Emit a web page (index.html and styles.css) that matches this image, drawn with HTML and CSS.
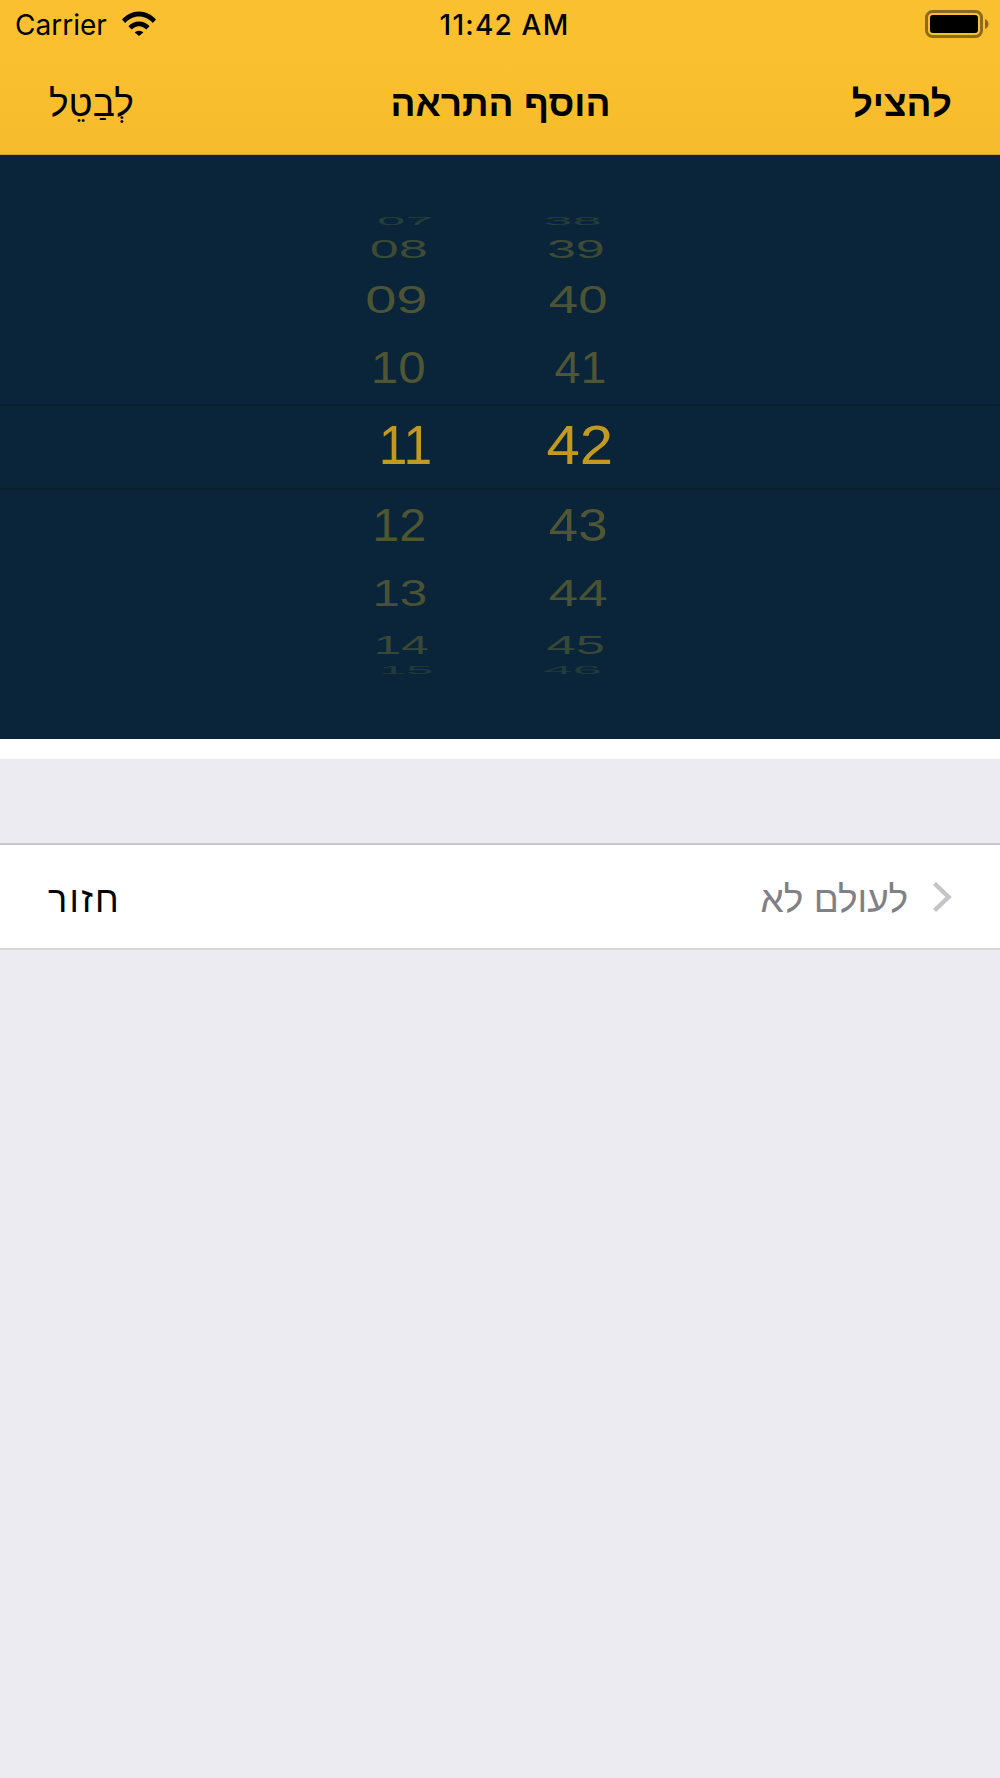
FILE: index.html
```html
<!DOCTYPE html>
<html lang="he">
<head>
<meta charset="utf-8">
<title>הוסף התראה</title>
<link rel="stylesheet" href="styles.css">
</head>
<body>
<div class="screen">
  <header class="top">
    <div class="status">
      <div class="status-left">
        <span class="carrier">Carrier</span>
        <svg class="wifi" viewBox="0 0 34 25" width="34" height="25" aria-hidden="true">
          <path d="M0 8.6C4.4 3.6 10.4 0.6 17 0.6s12.6 3 17 8l-3.2 3.3C27.200 8 22.400 5.500 17 5.500S6.800 8 3.200 11.900z"/>
          <path d="M6.400 15.200C9.100 12.300 12.900 10.400 17 10.400s7.900 1.900 10.600 4.800l-3.300 3.300C22.300 16.600 19.800 15.300 17 15.300s-5.300 1.300-7.300 3.200z"/>
          <path d="M12.700 21.500c1.100-1.100 2.600-1.800 4.300-1.800s3.200.7 4.300 1.800L17 25z"/>
        </svg>
      </div>
      <span class="time">11:42 AM</span>
      <svg class="battery" viewBox="0 0 64 28" width="64" height="28" aria-hidden="true">
        <rect x="1.500" y="1.500" width="55" height="25" rx="6" class="batt-shell"/>
        <rect x="5" y="5" width="48" height="18" rx="3"/>
        <path d="M60 9c2 .5 3.500 2.500 3.500 5s-1.500 4.500-3.500 5z" class="batt-nub"/>
      </svg>
    </div>
    <nav class="nav" dir="rtl">
      <span class="nav-save">להציל</span>
      <span class="nav-title">הוסף התראה</span>
      <span class="nav-cancel">לְבַטֵל</span>
    </nav>
  </header>

  <section class="picker">
    <div class="band"></div>
    <div class="wheels">
      <div class="wheel wheel-h">
        <div class="row r1"><span>07</span></div>
        <div class="row r2"><span>08</span></div>
        <div class="row r3"><span>09</span></div>
        <div class="row r4"><span>10</span></div>
        <div class="row r5"><span>11</span></div>
        <div class="row r6"><span>12</span></div>
        <div class="row r7"><span>13</span></div>
        <div class="row r8"><span>14</span></div>
        <div class="row r9"><span>15</span></div>
      </div>
      <div class="wheel wheel-m">
        <div class="row r1"><span>38</span></div>
        <div class="row r2"><span>39</span></div>
        <div class="row r3"><span>40</span></div>
        <div class="row r4"><span>41</span></div>
        <div class="row r5"><span>42</span></div>
        <div class="row r6"><span>43</span></div>
        <div class="row r7"><span>44</span></div>
        <div class="row r8"><span>45</span></div>
        <div class="row r9"><span>46</span></div>
      </div>
    </div>
  </section>

  <div class="white-strip"></div>

  <div class="table-row">
    <span class="row-label">חזור</span>
    <span class="row-value">לעולם לא</span>
    <svg class="chevron" viewBox="0 0 20 32" width="20" height="32" aria-hidden="true">
      <path d="M2.500 2.500L16.500 16L2.500 29.500"/>
    </svg>
  </div>
</div>
</body>
</html>
```

FILE: styles.css
```css
* { box-sizing: border-box; }
html, body { margin: 0; padding: 0; }
body {
  width: 1000px;
  height: 1778px;
  overflow: hidden;
  background: #ecebf2;
  font-family: "Liberation Sans", Arial, sans-serif;
  color: #000;
}
.screen { display: flex; flex-direction: column; height: 1778px; }

.top {
  height: 155px;
  background: linear-gradient(180deg, #fbc02f 0%, #fbc02f 40%, #f6bb2c 100%);
  border-bottom: 1px solid #c9a23a;
}
.status {
  height: 50px;
  padding: 0 11px 0 15px;
  display: flex;
  align-items: center;
  justify-content: space-between;
  position: relative;
}
.status-left { display: flex; align-items: center; gap: 15px; }
.carrier { font-family: Inter, "Liberation Sans", sans-serif; font-size: 28px; }
.wifi { fill: #000; margin-top: -3px; }
.time {
  position: absolute;
  left: 9px;
  right: 0;
  text-align: center;
  font-family: Inter, "Liberation Sans", sans-serif;
  font-size: 28px;
  font-weight: 500;
  letter-spacing: 1.2px;
}
.battery { fill: #000; margin-top: -3px; }
.batt-shell { fill: none; stroke: #8b6c1f; stroke-width: 3; }
.batt-nub { fill: #8b6c1f; }

.nav {
  height: 104px;
  padding: 4px 48px 0 49px;
  display: grid;
  grid-template-columns: 1fr auto 1fr;
  align-items: center;
  font-size: 37px;
}
.nav-save { font-weight: 700; }
.nav-title { font-weight: 700; }
.nav-cancel { text-align: left; }

.picker {
  height: 584px;
  background: #0a2539;
  position: relative;
  padding-top: 58px;
  overflow: hidden;
}
.band {
  position: absolute;
  left: 0;
  right: 0;
  top: 249px;
  height: 86px;
  border-top: 2px solid #08202f;
  border-bottom: 2px solid #08202f;
}
.wheels { display: flex; padding-left: 298px; position: relative; }
.wheel { width: 200px; }
.wheel-m { margin-left: -20px; }
.row {
  display: flex;
  align-items: center;
  justify-content: center;
  font-size: 56px;
  line-height: 1;
  white-space: nowrap;
}
.row span { display: block; }

.r1 { height: 16px; color: #263e39; }
.r2 { height: 40px; color: #3c4a36; }
.r3 { height: 62px; color: #4d5435; }
.r4 { height: 74px; color: #505634; }
.r5 { height: 80px; color: #c39a1f; }
.r6 { height: 80px; color: #505634; }
.r7 { height: 56px; color: #4a5234; }
.r8 { height: 48px; color: #384836; }
.r9 { height: 4px; color: #213b39; }

.wheel-h .r1 span { transform: translateX(7px) scale(.90, .2); }
.wheel-h .r2 span { transform: translateX(.5px) scale(.93, .45); }
.wheel-h .r3 span { transform: translateX(-1.700px) scale(1, .68); }
.wheel-h .r4 span { transform: scale(.88, .8); }
.wheel-h .r5 span { transform: translateX(7.400px) scale(.92, 1); }
.wheel-h .r6 span { transform: translateX(1px) scale(.865, .83); }
.wheel-h .r7 span { transform: translateX(1.700px) scale(.88, .67); }
.wheel-h .r8 span { transform: translateX(3px) scale(.88, .45); }
.wheel-h .r9 span { transform: translateX(8px) scale(.86, .18); }

.wheel-m .r1 span { transform: translateX(-5.700px) scale(.94, .2); }
.wheel-m .r2 span { transform: translateX(-2.300px) scale(.93, .45); }
.wheel-m .r3 span { transform: scale(.94, .68); }
.wheel-m .r4 span { transform: translateX(2.300px) scale(.83, .8); }
.wheel-m .r5 span { transform: translateX(1.700px) scale(1.07, 1); }
.wheel-m .r6 span { transform: scale(.94, .83); }
.wheel-m .r7 span { transform: scale(.94, .67); }
.wheel-m .r8 span { transform: translateX(-2.300px) scale(.94, .45); }
.wheel-m .r9 span { transform: translateX(-5.700px) scale(.94, .18); }

.white-strip { height: 20px; background: #fff; }

.table-row {
  margin-top: 84px;
  height: 107px;
  background: #fff;
  border-top: 2px solid #c9c8cd;
  border-bottom: 2px solid #d6d5da;
  padding: 0 48px;
  display: flex;
  align-items: center;
  font-size: 36px;
}
.row-label { flex: 1; margin-top: 7px; letter-spacing: 2.300px; }
.row-value { color: #808086; margin: 7px 24px 0 0; font-size: 37px; }
.chevron { fill: none; stroke: #c4c4c9; stroke-width: 4.500; }
```
